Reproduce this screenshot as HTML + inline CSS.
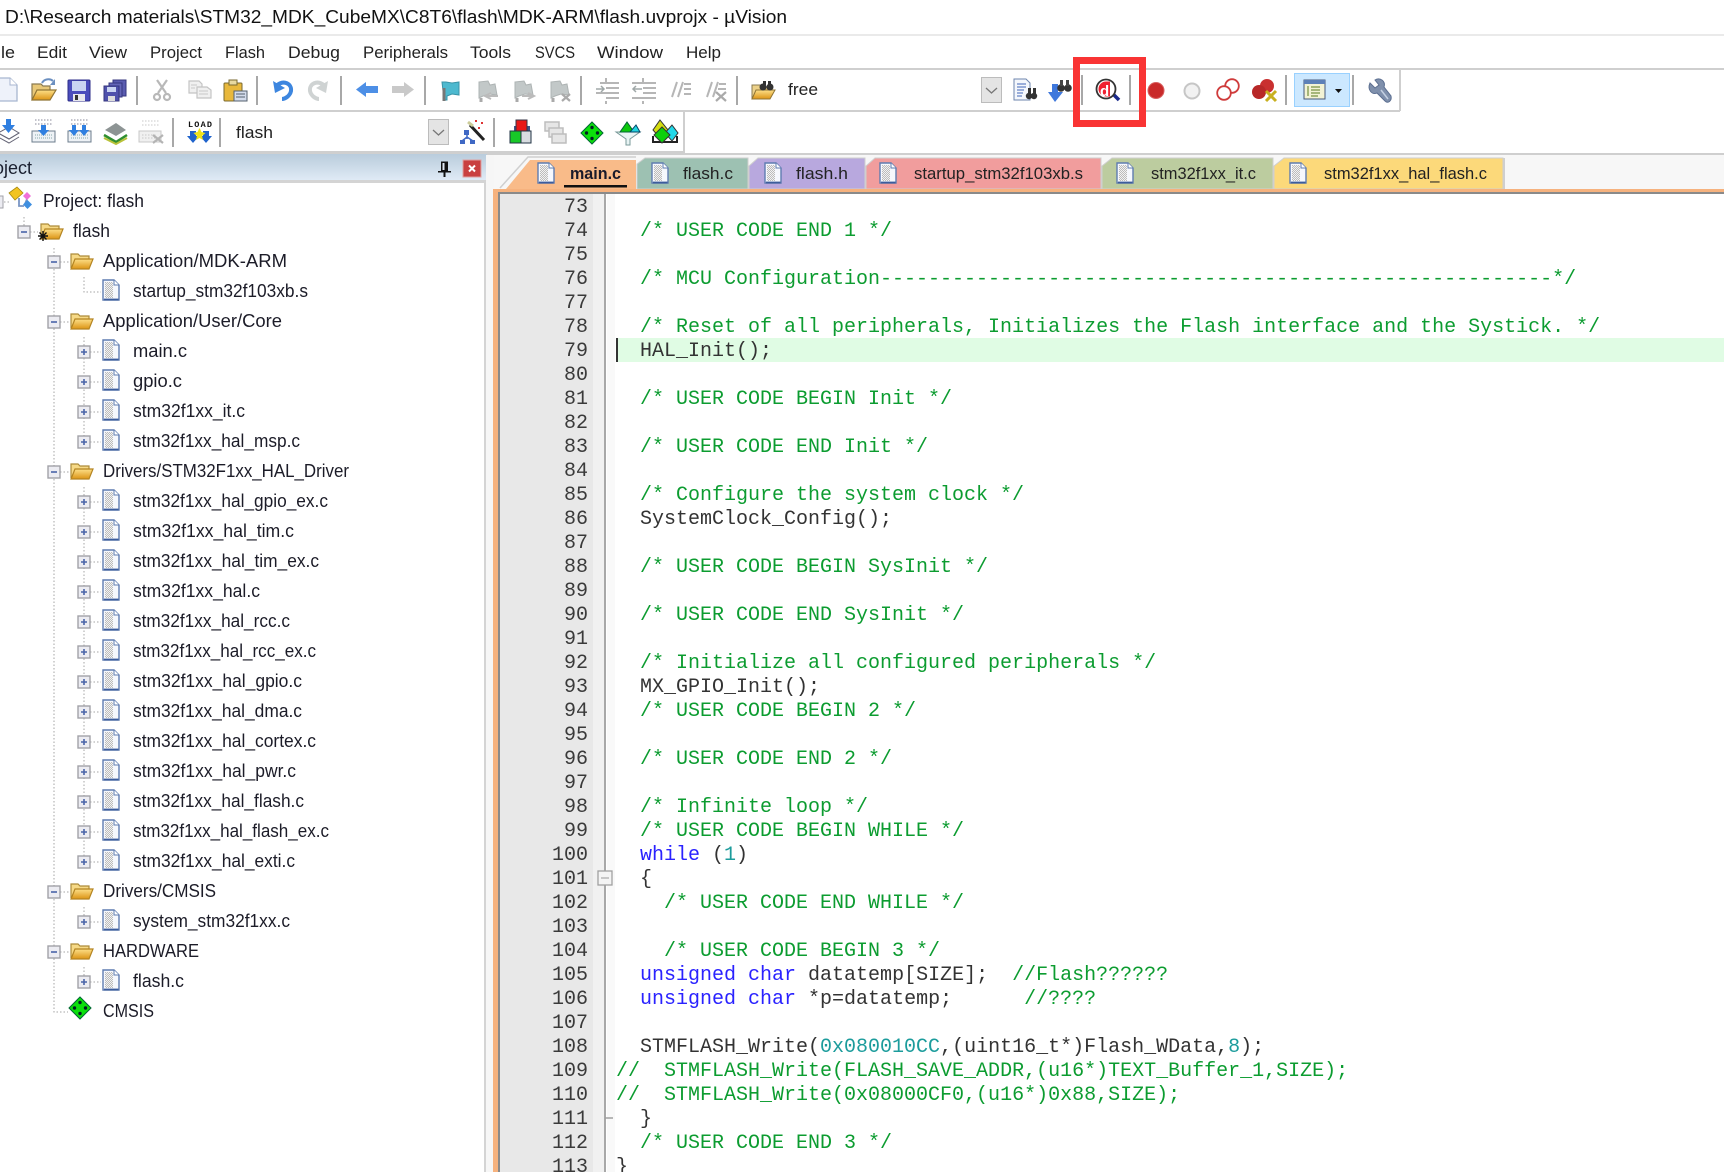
<!DOCTYPE html>
<html lang="en"><head><meta charset="utf-8"><title>flash.uvprojx - µVision</title>
<style>
html,body{margin:0;padding:0;background:#fff;width:1724px;height:1172px;overflow:hidden}
svg{display:block;font-family:"Liberation Sans",sans-serif}
text{white-space:pre}
.t{font-size:18px;fill:#1c1c28}
.m{font-size:16.5px;fill:#222}
.tb{font-size:16.5px;fill:#222}
.c{font-family:"Liberation Mono",monospace;font-size:20px;fill:#333}
.n{font-family:"Liberation Mono",monospace;font-size:20px;fill:#3a3a3a;text-anchor:end}
.g{fill:#0c9c30}.k{fill:#2a22ff}.v{fill:#1c9c9c}
.s{stroke:#a8a8a8;stroke-width:2}
.d{stroke:#a4a4a4;stroke-width:1;stroke-dasharray:1.5 2;fill:none}
</style></head><body>
<svg width="1724" height="1172" viewBox="0 0 1724 1172" xmlns="http://www.w3.org/2000/svg">
<defs>
<linearGradient id="hd" x1="0" y1="0" x2="0" y2="1"><stop offset="0" stop-color="#b9ccdc"/><stop offset="1" stop-color="#dfeaf5"/></linearGradient>
<linearGradient id="fo" x1="0" y1="0" x2="0" y2="1"><stop offset="0" stop-color="#fde08a"/><stop offset="1" stop-color="#dc9414"/></linearGradient>
<pattern id="dt" width="2" height="2" patternUnits="userSpaceOnUse"><rect width="2" height="2" fill="#f2f2f2"/><rect width="1" height="1" fill="#bcbcbc"/><rect x="1" y="1" width="1" height="1" fill="#bcbcbc"/></pattern>
<g id="doc"><path d="M1 1H12L17 6V21H1Z" fill="#f6f8fd" stroke="#5f7cb0" stroke-width="1.400"/><rect x="3" y="3" width="8" height="16" fill="url(#dt)"/><path d="M12 1V6H17" fill="#fff" stroke="#5f7cb0"/><path d="M2 20.5H16.500" stroke="#3c5c9c" stroke-width="1.800"/></g>
<g id="fol"><path d="M1 16V2H8L10 4H19V8" fill="#f6d986" stroke="#ad8c3a" stroke-width="1.200"/><path d="M1 17L5 7H23L19 17Z" fill="url(#fo)" stroke="#b48522" stroke-width="1.200"/></g>
<g id="bm"><rect x="-6" y="-6" width="12" height="12" fill="#ececf2" stroke="#a2a2a8" stroke-width="1.400"/><path d="M-3 0H3" stroke="#4a64a8" stroke-width="1.600"/></g>
<g id="bp"><rect x="-6" y="-6" width="12" height="12" fill="#ececf2" stroke="#a2a2a8" stroke-width="1.400"/><path d="M-3 0H3M0-3V3" stroke="#4a64a8" stroke-width="1.600"/></g>
<g id="r3"><path class="d" d="M90 0H101"/><use href="#bp" x="84" y="0"/><use href="#doc" x="102" y="-13"/></g>
<g id="r2"><path class="d" d="M60 0H69"/><use href="#bm" x="54" y="0"/><use href="#fol" x="70" y="-10"/></g>
<g id="dia"><path d="M11 0L22 11L11 22L0 11Z" fill="#0be00b" stroke="#063" stroke-width="1"/><g fill="#022"><circle cx="11" cy="5.500" r="1.700"/><circle cx="5.500" cy="11" r="1.700"/><circle cx="16.500" cy="11" r="1.700"/><circle cx="11" cy="16.500" r="1.700"/></g></g>
<g id="gfl"><path d="M3 2L12 1L14 5L19 4L21 15L13 14L7 16L3 18Z" fill="#c2c8c8" stroke="#aeb4b4"/><path d="M5 18V22" stroke="#aaa" stroke-width="3"/></g>
</defs>

<rect width="1724" height="1172" fill="#fff"/>
<!-- title + menu -->
<text x="5" y="23" font-size="18" fill="#111" textLength="782" lengthAdjust="spacingAndGlyphs">D:\Research materials\STM32_MDK_CubeMX\C8T6\flash\MDK-ARM\flash.uvprojx - µVision</text>
<rect y="34.500" width="1724" height="1" fill="#d4d4d4"/>
<text class="m" x="1" y="58" textLength="14" lengthAdjust="spacingAndGlyphs">le</text>
<text class="m" x="37" y="58" textLength="30" lengthAdjust="spacingAndGlyphs">Edit</text>
<text class="m" x="89" y="58" textLength="38" lengthAdjust="spacingAndGlyphs">View</text>
<text class="m" x="150" y="58" textLength="52" lengthAdjust="spacingAndGlyphs">Project</text>
<text class="m" x="225" y="58" textLength="40" lengthAdjust="spacingAndGlyphs">Flash</text>
<text class="m" x="288" y="58" textLength="52" lengthAdjust="spacingAndGlyphs">Debug</text>
<text class="m" x="363" y="58" textLength="85" lengthAdjust="spacingAndGlyphs">Peripherals</text>
<text class="m" x="470" y="58" textLength="41" lengthAdjust="spacingAndGlyphs">Tools</text>
<text class="m" x="535" y="58" textLength="40" lengthAdjust="spacingAndGlyphs">SVCS</text>
<text class="m" x="597" y="58" textLength="66" lengthAdjust="spacingAndGlyphs">Window</text>
<text class="m" x="686" y="58" textLength="35" lengthAdjust="spacingAndGlyphs">Help</text>

<!-- toolbar frames -->
<rect y="68" width="1724" height="2" fill="#cfcfcf"/>
<rect y="70" width="1400" height="40" fill="#fff"/>
<rect y="110" width="1400" height="2" fill="#cfcfcf"/>
<rect x="1399" y="70" width="2" height="41" fill="#cfcfcf"/>
<rect y="112" width="684" height="39" fill="#fff"/>
<rect y="151" width="685" height="2" fill="#cfcfcf"/>
<rect x="683" y="112" width="2" height="40" fill="#cfcfcf"/>

<!-- toolbar separators -->
<g class="s"><path d="M137 76V105M257 76V105M341 76V105M425 76V105M581 76V105M737 76V105M1082 75V105M1130 75V105M1286 75V105M1353 75V105M173 118V147M220 118V147M494 118V147"/></g>

<!-- new -->
<path d="M-4 78H10L17 85V101H-4Z" fill="#eef2fa" stroke="#a8b6d0" stroke-width="1.300"/><path d="M10 78V85H17" fill="#fff" stroke="#a8b6d0"/>
<!-- open -->
<path d="M32 100V84H41L43 86H50V90" fill="#e8c878" stroke="#8a7a50" stroke-width="1.200"/><path d="M32 100L37 90H56L50 100Z" fill="url(#fo)" stroke="#8f7434" stroke-width="1.200"/><path d="M42 83C44 79 50 78 53 81" fill="none" stroke="#6b8fc0" stroke-width="2"/><path d="M55 79V85H50Z" fill="#6b8fc0"/>
<!-- save -->
<rect x="68" y="80" width="22" height="21" rx="1" fill="#4a4cbc" stroke="#2c2e88"/><rect x="72" y="81" width="14" height="10" fill="#c9d4f2"/><rect x="73" y="94" width="12" height="7" fill="#e8e8ee"/><rect x="75" y="95" width="3" height="5" fill="#333"/>
<!-- save all -->
<g stroke="#34367e"><rect x="113" y="80" width="13" height="16" fill="#5a5cb0"/><rect x="109" y="83" width="13" height="14" fill="#6466b8"/><rect x="104" y="86" width="15" height="15" fill="#4f51ac"/></g><rect x="107" y="87" width="9" height="5" fill="#c9d4f2"/><rect x="108" y="96" width="7" height="5" fill="#ddd"/>
<!-- cut -->
<g fill="none" stroke="#b8b8b8" stroke-width="2.200"><path d="M157 80L166 93M167 80L158 93"/><circle cx="157" cy="97" r="3"/><circle cx="167" cy="97" r="3"/></g>
<!-- copy -->
<g fill="#f0f0f0" stroke="#c4c4c4" stroke-width="1.200"><path d="M189 81H199L202 84V93H189Z"/><path d="M197 87H207L211 90V98H197Z"/></g><path d="M199 91H208M199 94H208M191 85H197M191 88H195" stroke="#c8c8c8"/>
<!-- paste -->
<rect x="224" y="83" width="18" height="18" rx="1" fill="#e8b83c" stroke="#7a6a30"/><rect x="229" y="80" width="8" height="5" fill="#e8d9a0" stroke="#7a6a30"/><rect x="234" y="91" width="13" height="10" fill="#d4dcec" stroke="#55606e"/><path d="M236 94H245M236 97H245" stroke="#55606e"/>
<!-- undo / redo -->
<path d="M276 86C284 79 292 84 291 91C290 96 285 99 282 99" fill="none" stroke="#3d86df" stroke-width="4"/><path d="M273 81L275 93L285 88Z" fill="#3d86df"/>
<path d="M325 86C317 79 309 84 310 91C311 96 316 99 319 99" fill="none" stroke="#cfd3d3" stroke-width="4"/><path d="M328 81L326 93L316 88Z" fill="#cfd3d3"/>
<!-- arrows -->
<path d="M356 89.500L366 82V86H378V93H366V97Z" fill="#4d8fe6"/>
<path d="M414 89.500L404 82V86H392V93H404V97Z" fill="#c9c9c9"/>
<!-- flags -->
<path d="M442 82H446L452 83L459 82V95L452 94L447 96V100H444Z" fill="#4db9cf" stroke="#3a94a8"/><path d="M444 88V101" stroke="#777" stroke-width="3"/>
<use href="#gfl" x="476" y="80"/><use href="#gfl" x="512" y="80"/><use href="#gfl" x="548" y="80"/>
<path d="M485 96H498M491 93L485 96L491 99" fill="none" stroke="#bbb" stroke-width="2"/>
<path d="M522 96H534M528 93L534 96L528 99" fill="none" stroke="#bbb" stroke-width="2"/>
<path d="M562 94L570 101M570 94L562 101" stroke="#aaa" stroke-width="2.200"/>
<!-- indent -->
<g stroke="#b6b6b6" stroke-width="2"><path d="M606 82V78M600 83H619M606 88H619M596 93H619M606 98H619M606 101V104"/><path d="M643 78V82M632 83H656M643 88H656M643 93H656M632 98H656M643 101V104"/><path d="M672 97L677 82M678 97L683 82M684 84H691M684 89H691M684 94H691"/><path d="M707 97L712 82M713 97L718 82M719 84H726M718 89H726"/></g>
<path d="M596 89H604M601 86L604 89L601 92M642 89H633M636 86L633 89L636 92" fill="none" stroke="#a0a8a8" stroke-width="1.500"/>
<path d="M716 92L726 101M726 92L716 101" stroke="#aaa" stroke-width="2.200"/>
<!-- find in folder -->
<path d="M752 99V85H760L762 87H772V91" fill="#ecd189" stroke="#8a7a50"/><path d="M752 99L756 90H775L770 99Z" fill="url(#fo)" stroke="#8f7434"/>
<circle cx="763" cy="87" r="3.500" fill="#333"/><circle cx="770" cy="87" r="3.500" fill="#333"/><rect x="763" y="81" width="3" height="4" fill="#333"/><rect x="768" y="81" width="3" height="4" fill="#333"/>
<text class="tb" x="788" y="95" font-weight="400" textLength="30" lengthAdjust="spacingAndGlyphs">free</text>
<!-- combo -->
<rect x="981.500" y="77.500" width="20" height="25" fill="#e4e4e4" stroke="#bcbcbc"/><path d="M986 88L991.500 93L997 88" fill="none" stroke="#777" stroke-width="1.300"/>
<!-- find doc -->
<path d="M1014 79H1026L1030 83V100H1014Z" fill="#f4f7fc" stroke="#6e86ae"/><path d="M1017 84H1026M1017 87H1026M1017 90H1024M1017 93H1023M1017 96H1022" stroke="#3f66b8"/>
<circle cx="1029" cy="96" r="3.200" fill="#333"/><circle cx="1034" cy="96" r="3.200" fill="#333"/><rect x="1028" y="88" width="3" height="6" fill="#333"/><rect x="1033" y="88" width="3" height="6" fill="#333"/>
<!-- binoc + arrow -->
<path d="M1052 84H1058V92H1063L1055 102L1048 92H1052Z" fill="#3f78dc"/>
<circle cx="1061" cy="88" r="3.800" fill="#333"/><circle cx="1068" cy="88" r="3.800" fill="#333"/><rect x="1060" y="80" width="3" height="6" fill="#444"/><rect x="1066" y="80" width="3" height="6" fill="#444"/>
<!-- debug -->
<path d="M1113 94L1119 100" stroke="#1a2a8c" stroke-width="3.500"/>
<circle cx="1106" cy="89" r="9.500" fill="#fff" stroke="#333" stroke-width="1.800"/>
<path d="M1106 81.500A7.500 7.500 0 0 0 1106 96.500Z" fill="#f02030"/><path d="M1106 81.500H1110V96.500H1106Z" fill="#f02030"/>
<text x="1100" y="96" font-size="15" font-weight="700" fill="#fff">d</text>
<!-- red box -->
<rect x="1076.500" y="60.500" width="66" height="63" fill="none" stroke="#f93434" stroke-width="7"/>
<!-- breakpoints -->
<circle cx="1156" cy="90.500" r="8" fill="#c92a2a" stroke="#d86060"/>
<circle cx="1192" cy="91" r="7.500" fill="#f2f2f2" stroke="#c6c6c6" stroke-width="2"/>
<circle cx="1232" cy="86" r="6.800" fill="#fff" stroke="#cf3b3b" stroke-width="1.800"/><circle cx="1224" cy="93" r="6.800" fill="#fff" stroke="#cf3b3b" stroke-width="1.800"/>
<circle cx="1267" cy="86" r="7" fill="#c93030"/><circle cx="1259" cy="92" r="7" fill="#b82828"/><path d="M1266 91L1276 101M1276 91L1266 101" stroke="#c8b020" stroke-width="3"/>
<!-- window button -->
<rect x="1294.500" y="73.500" width="55" height="33" fill="#cce8ff" stroke="#99d1ff"/>
<rect x="1304" y="80" width="21" height="19" fill="#f2f2d4" stroke="#47587a"/><rect x="1304" y="80" width="21" height="4" fill="#5c80b8"/><path d="M1308 86V96M1311 87H1320M1311 90H1320M1311 93H1320M1311 96H1318" stroke="#5b7a20"/>
<path d="M1335 89H1342L1338.500 93Z" fill="#111"/>
<!-- wrench -->
<path d="M1370 83L1375 88L1379 85L1375 80C1380 77 1386 81 1384 87L1391 96C1392 101 1388 104 1385 101L1377 93C1372 95 1367 90 1370 83Z" fill="#7f90ac" stroke="#5b6e90"/><path d="M1381 90L1388 99" stroke="#c4d0e2" stroke-width="1.500"/>

<!-- toolbar 2 -->
<path d="M-2 133L9 127L19 133L9 139Z" fill="#fff" stroke="#667"/><path d="M-2 137L9 143L19 137M-2 133L9 139L19 133" fill="none" stroke="#667"/><path d="M6 119H11V125H15L8.500 133L2 125H6Z" fill="#2f7fe0"/>
<g fill="#eef2f6" stroke="#6c7c8c"><rect x="32" y="131" width="23" height="11"/><rect x="68" y="131" width="23" height="11"/></g>
<path d="M35 135H52M35 138H52M71 135H88M71 138H88" stroke="#8aa" stroke-dasharray="1 1"/>
<path d="M35 120H52M35 124H52M71 120H88M71 124H88" stroke="#889" stroke-dasharray="1.500 1.500"/>
<path d="M41 125H46V130H49L43.500 136L38 130H41Z" fill="#2f7fe0"/><path d="M72 125H76V130H79L74 136L69 130H72ZM82 125H86V130H89L84 136L79 130H82Z" fill="#2f7fe0"/>
<path d="M104 135L116 142L127 135" fill="none" stroke="#2f8f2f" stroke-width="2.500"/><path d="M104 138L116 144L127 138" fill="none" stroke="#b9c23a" stroke-width="2"/><path d="M105 130L116 123L126 130L116 136Z" fill="#8d9494"/>
<rect x="139" y="131" width="22" height="11" fill="#f0f0f0" stroke="#c8c8c8"/><path d="M142 121H160M142 125H160M142 135H156M142 138H156" stroke="#c8c8c8" stroke-dasharray="1.500 1.500"/><path d="M153 135L163 143M163 135L153 143" stroke="#b4b4b4" stroke-width="2.200"/>
<text x="188" y="127" font-family="Liberation Mono,monospace" font-size="8.500" font-weight="700" fill="#111" textLength="24">LOAD</text>
<path d="M190 131H196V136H199L193 143L187 136H190ZM203 131H209V136H212L206 143L200 136H203Z" fill="#1f63cc"/><path d="M199.500 128L201.500 132L205.500 133L202 136L203 140L199.500 138L196 140L197 136L193.500 133L197.500 132Z" fill="#eee21a"/>
<text class="tb" x="236" y="138" textLength="37" lengthAdjust="spacingAndGlyphs">flash</text>
<rect x="428.500" y="119.500" width="20" height="25" fill="#e4e4e4" stroke="#bcbcbc"/><path d="M433 130L438.500 135L444 130" fill="none" stroke="#777" stroke-width="1.300"/>
<!-- wand -->
<path d="M470 125L484 140" stroke="#222" stroke-width="3"/><path d="M468 122L473 126" stroke="#cc9" stroke-width="3"/>
<path d="M467 133V139M462 141L467 137L473 141" fill="none" stroke="#3f68c4" stroke-width="1.500"/><rect x="464" y="130" width="5" height="5" fill="#3f68c4"/><rect x="460" y="140" width="5" height="4" fill="#3f68c4"/><rect x="470" y="140" width="5" height="4" fill="#3f68c4"/>
<g fill="#d33"><rect x="475" y="120" width="2" height="2"/><rect x="481" y="122" width="2" height="2"/><rect x="478" y="127" width="2" height="2"/></g>
<!-- components -->
<path d="M514 131V126H530V131" fill="#3e5488"/><rect x="516" y="120" width="11" height="11" fill="#e81818" stroke="#334"/><rect x="510" y="131" width="11" height="12" fill="#18c828" stroke="#234"/><rect x="521" y="131" width="10" height="12" fill="#d8dce0" stroke="#234"/>
<g fill="#e6e6e6" stroke="#bdbdbd" stroke-width="1.500"><rect x="545" y="122" width="14" height="9"/><rect x="549" y="128" width="14" height="9"/><rect x="552" y="134" width="14" height="9"/></g>
<use href="#dia" x="581" y="122"/>
<!-- funnel -->
<path d="M616 132H640L630 139V145H626V139Z" fill="#e8f4f4" stroke="#7a9a9a"/><path d="M620 132L627 122L634 132Z" fill="#0cc80c" stroke="#063"/><path d="M630 132L636 125L640 132Z" fill="#22d4e0" stroke="#046"/>
<!-- multi -->
<path d="M653 136V142H677V136" fill="none" stroke="#222" stroke-width="2"/><path d="M660 120L668 130L660 138L653 130Z" fill="#d4dc10" stroke="#333"/><path d="M672 125L678 133L672 141L665 133Z" fill="#22d8e8" stroke="#333"/><path d="M662 127L670 135L662 143L654 135Z" fill="#0cd00c" stroke="#333"/>

<!-- project header -->
<rect y="153" width="1724" height="2" fill="#cfcfcf"/>
<rect y="154" width="487" height="26" fill="url(#hd)"/>
<text x="-24" y="174" font-size="18" fill="#1a2030" textLength="56" lengthAdjust="spacingAndGlyphs">Project</text>
<path d="M441 161.500H448V171H451V172.500H445.500V177H443.500V172.500H438V171H441Z" fill="#111"/><rect x="442.500" y="163" width="2" height="7" fill="#dfe8f2"/>
<rect x="463" y="160" width="18" height="17" fill="#c94040" stroke="#e0a0a0"/><path d="M469 165.500L475 171.500M475 165.500L469 171.500" stroke="#fff" stroke-width="2"/>
<rect y="180" width="487" height="3" fill="#d4d4d4"/>
<rect x="484" y="180" width="2" height="992" fill="#d4d4d4"/>
<rect x="486" y="155" width="8" height="1017" fill="#f6f6f6"/>

<!-- tree lines -->
<path class="d" d="M24 217V226M30 232H38M4 202H10"/>
<path class="d" d="M54 248V1012H68"/>
<path class="d" d="M84 277V292H101M84 337V442M84 487V862M84 907V922M84 967V982"/>
<rect x="-4" y="196" width="7" height="12" fill="#ececf2" stroke="#a2a2a8"/>
<!-- project icon -->
<path d="M19 198V206H24M27 199L25 204" fill="none" stroke="#7a96c4" stroke-width="1.800"/>
<path d="M9 193L17 187L23 193L15 200Z" fill="#f2c420" stroke="#a88a10" stroke-width=".8"/><path d="M23 196L27 192L31 196L27 200Z" fill="#f070d8"/><path d="M23 204.500L27.500 200L32 204.500L27.500 209Z" fill="#3f8fe0"/>
<!-- flash -->
<use href="#bm" x="24" y="232"/>
<use href="#fol" x="40" y="222"/>
<path d="M38 236H48M43 231V241M39.500 232.500L46.500 239.500M46.500 232.500L39.500 239.500" stroke="#111" stroke-width="1.400"/>

<use href="#r2" y="262"/><use href="#r2" y="322"/><use href="#r2" y="472"/><use href="#r2" y="892"/><use href="#r2" y="952"/>
<use href="#doc" x="102" y="279"/>
<use href="#r3" y="352"/><use href="#r3" y="382"/><use href="#r3" y="412"/><use href="#r3" y="442"/>
<use href="#r3" y="502"/><use href="#r3" y="532"/><use href="#r3" y="562"/><use href="#r3" y="592"/><use href="#r3" y="622"/><use href="#r3" y="652"/><use href="#r3" y="682"/><use href="#r3" y="712"/><use href="#r3" y="742"/><use href="#r3" y="772"/><use href="#r3" y="802"/><use href="#r3" y="832"/><use href="#r3" y="862"/>
<use href="#r3" y="922"/><use href="#r3" y="982"/>
<use href="#dia" x="69" y="997"/>

<!-- tree text -->
<g transform="translate(0,-1)">
<text class="t" x="43" y="208" textLength="101" lengthAdjust="spacingAndGlyphs">Project: flash</text>
<text class="t" x="73" y="238" textLength="37" lengthAdjust="spacingAndGlyphs">flash</text>
<text class="t" x="103" y="268" textLength="184" lengthAdjust="spacingAndGlyphs">Application/MDK-ARM</text>
<text class="t" x="133" y="298" textLength="175" lengthAdjust="spacingAndGlyphs">startup_stm32f103xb.s</text>
<text class="t" x="103" y="328" textLength="179" lengthAdjust="spacingAndGlyphs">Application/User/Core</text>
<text class="t" x="133" y="358" textLength="54" lengthAdjust="spacingAndGlyphs">main.c</text>
<text class="t" x="133" y="388" textLength="49" lengthAdjust="spacingAndGlyphs">gpio.c</text>
<text class="t" x="133" y="418" textLength="112" lengthAdjust="spacingAndGlyphs">stm32f1xx_it.c</text>
<text class="t" x="133" y="448" textLength="167" lengthAdjust="spacingAndGlyphs">stm32f1xx_hal_msp.c</text>
<text class="t" x="103" y="478" textLength="246" lengthAdjust="spacingAndGlyphs">Drivers/STM32F1xx_HAL_Driver</text>
<text class="t" x="133" y="508" textLength="195" lengthAdjust="spacingAndGlyphs">stm32f1xx_hal_gpio_ex.c</text>
<text class="t" x="133" y="538" textLength="161" lengthAdjust="spacingAndGlyphs">stm32f1xx_hal_tim.c</text>
<text class="t" x="133" y="568" textLength="186" lengthAdjust="spacingAndGlyphs">stm32f1xx_hal_tim_ex.c</text>
<text class="t" x="133" y="598" textLength="127" lengthAdjust="spacingAndGlyphs">stm32f1xx_hal.c</text>
<text class="t" x="133" y="628" textLength="157" lengthAdjust="spacingAndGlyphs">stm32f1xx_hal_rcc.c</text>
<text class="t" x="133" y="658" textLength="183" lengthAdjust="spacingAndGlyphs">stm32f1xx_hal_rcc_ex.c</text>
<text class="t" x="133" y="688" textLength="169" lengthAdjust="spacingAndGlyphs">stm32f1xx_hal_gpio.c</text>
<text class="t" x="133" y="718" textLength="169" lengthAdjust="spacingAndGlyphs">stm32f1xx_hal_dma.c</text>
<text class="t" x="133" y="748" textLength="183" lengthAdjust="spacingAndGlyphs">stm32f1xx_hal_cortex.c</text>
<text class="t" x="133" y="778" textLength="163" lengthAdjust="spacingAndGlyphs">stm32f1xx_hal_pwr.c</text>
<text class="t" x="133" y="808" textLength="171" lengthAdjust="spacingAndGlyphs">stm32f1xx_hal_flash.c</text>
<text class="t" x="133" y="838" textLength="196" lengthAdjust="spacingAndGlyphs">stm32f1xx_hal_flash_ex.c</text>
<text class="t" x="133" y="868" textLength="162" lengthAdjust="spacingAndGlyphs">stm32f1xx_hal_exti.c</text>
<text class="t" x="103" y="898" textLength="113" lengthAdjust="spacingAndGlyphs">Drivers/CMSIS</text>
<text class="t" x="133" y="928" textLength="157" lengthAdjust="spacingAndGlyphs">system_stm32f1xx.c</text>
<text class="t" x="103" y="958" textLength="96" lengthAdjust="spacingAndGlyphs">HARDWARE</text>
<text class="t" x="133" y="988" textLength="51" lengthAdjust="spacingAndGlyphs">flash.c</text>
<text class="t" x="103" y="1018" textLength="51" lengthAdjust="spacingAndGlyphs">CMSIS</text>
</g>

<!-- tab strip -->
<rect x="494" y="155" width="1230" height="35" fill="#f7f7f7"/>
<path d="M500 188L528 157H636" fill="none" stroke="#cfcfcf" stroke-width="1.500"/>
<path d="M506 189L530 160H636V189Z" fill="#f9bb89"/>
<path d="M637 189V164L645 158H748V189Z" fill="#9dc1b2" stroke="#cfcfcf"/>
<path d="M749 189V166L758 158H865V189Z" fill="#b8a8de" stroke="#cfcfcf"/>
<path d="M866 189V166L875 158H1101V189Z" fill="#f19d9d" stroke="#cfcfcf"/>
<path d="M1102 189V166L1112 158H1273V189Z" fill="#bccc9f" stroke="#cfcfcf"/>
<path d="M1274 189V166L1284 158H1503V189Z" fill="#fcd97a" stroke="#cfcfcf"/>
<rect x="1503" y="158" width="2" height="31" fill="#cfcfcf"/>
<use href="#doc" x="537" y="162"/><use href="#doc" x="651" y="162"/><use href="#doc" x="764" y="162"/><use href="#doc" x="879" y="162"/><use href="#doc" x="1116" y="162"/><use href="#doc" x="1289" y="162"/>
<text x="570" y="179" font-size="16.500" font-weight="700" fill="#1a1a2a" textLength="51" lengthAdjust="spacingAndGlyphs">main.c</text>
<rect x="564" y="185" width="63" height="2.500" fill="#111"/>
<text class="tb" x="683" y="179" textLength="50" lengthAdjust="spacingAndGlyphs">flash.c</text>
<text class="tb" x="796" y="179" textLength="52" lengthAdjust="spacingAndGlyphs">flash.h</text>
<text class="tb" x="914" y="179" textLength="169" lengthAdjust="spacingAndGlyphs">startup_stm32f103xb.s</text>
<text class="tb" x="1151" y="179" textLength="105" lengthAdjust="spacingAndGlyphs">stm32f1xx_it.c</text>
<text class="tb" x="1324" y="179" textLength="163" lengthAdjust="spacingAndGlyphs">stm32f1xx_hal_flash.c</text>

<!-- editor frame -->
<rect x="493" y="189" width="1231" height="3" fill="#f6b27e"/>
<rect x="493" y="189" width="5" height="983" fill="#f6b27e"/>
<rect x="498" y="192" width="1226" height="2" fill="#8a8a8a"/>
<rect x="498" y="192" width="2" height="980" fill="#8a8a8a"/>
<rect x="500" y="194" width="93" height="978" fill="#e8e8e8"/>
<rect x="593" y="194" width="11" height="978" fill="#f1f1f1"/>
<rect x="607" y="194" width="8" height="978" fill="#f9f9f9"/>
<rect x="604" y="194" width="2" height="978" fill="#a8a8a8"/>
<rect x="618" y="338" width="1106" height="24" fill="#e0fce4"/>
<rect x="616" y="338" width="2" height="24" fill="#333"/>
<rect x="598" y="871" width="14" height="14" fill="#f4f4f4" stroke="#a0a0a0" stroke-width="1.300"/>
<path d="M601 878H609" stroke="#999"/>
<path d="M605 1118H613" stroke="#a0a0a0" stroke-width="1.500"/>

<!-- line numbers -->
<g transform="translate(0,-1)">
<text class="n" x="588" y="213">73</text>
<text class="n" x="588" y="237">74</text>
<text class="n" x="588" y="261">75</text>
<text class="n" x="588" y="285">76</text>
<text class="n" x="588" y="309">77</text>
<text class="n" x="588" y="333">78</text>
<text class="n" x="588" y="357">79</text>
<text class="n" x="588" y="381">80</text>
<text class="n" x="588" y="405">81</text>
<text class="n" x="588" y="429">82</text>
<text class="n" x="588" y="453">83</text>
<text class="n" x="588" y="477">84</text>
<text class="n" x="588" y="501">85</text>
<text class="n" x="588" y="525">86</text>
<text class="n" x="588" y="549">87</text>
<text class="n" x="588" y="573">88</text>
<text class="n" x="588" y="597">89</text>
<text class="n" x="588" y="621">90</text>
<text class="n" x="588" y="645">91</text>
<text class="n" x="588" y="669">92</text>
<text class="n" x="588" y="693">93</text>
<text class="n" x="588" y="717">94</text>
<text class="n" x="588" y="741">95</text>
<text class="n" x="588" y="765">96</text>
<text class="n" x="588" y="789">97</text>
<text class="n" x="588" y="813">98</text>
<text class="n" x="588" y="837">99</text>
<text class="n" x="588" y="861">100</text>
<text class="n" x="588" y="885">101</text>
<text class="n" x="588" y="909">102</text>
<text class="n" x="588" y="933">103</text>
<text class="n" x="588" y="957">104</text>
<text class="n" x="588" y="981">105</text>
<text class="n" x="588" y="1005">106</text>
<text class="n" x="588" y="1029">107</text>
<text class="n" x="588" y="1053">108</text>
<text class="n" x="588" y="1077">109</text>
<text class="n" x="588" y="1101">110</text>
<text class="n" x="588" y="1125">111</text>
<text class="n" x="588" y="1149">112</text>
<text class="n" x="588" y="1173">113</text>
</g>

<!-- code -->
<g transform="translate(-1,-1)">
<text class="c g" x="641" y="237">/* USER CODE END 1 */</text>
<text class="c g" x="641" y="285">/* MCU Configuration--------------------------------------------------------*/</text>
<text class="c g" x="641" y="333">/* Reset of all peripherals, Initializes the Flash interface and the Systick. */</text>
<text class="c" x="641" y="357">HAL_Init();</text>
<text class="c g" x="641" y="405">/* USER CODE BEGIN Init */</text>
<text class="c g" x="641" y="453">/* USER CODE END Init */</text>
<text class="c g" x="641" y="501">/* Configure the system clock */</text>
<text class="c" x="641" y="525">SystemClock_Config();</text>
<text class="c g" x="641" y="573">/* USER CODE BEGIN SysInit */</text>
<text class="c g" x="641" y="621">/* USER CODE END SysInit */</text>
<text class="c g" x="641" y="669">/* Initialize all configured peripherals */</text>
<text class="c" x="641" y="693">MX_GPIO_Init();</text>
<text class="c g" x="641" y="717">/* USER CODE BEGIN 2 */</text>
<text class="c g" x="641" y="765">/* USER CODE END 2 */</text>
<text class="c g" x="641" y="813">/* Infinite loop */</text>
<text class="c g" x="641" y="837">/* USER CODE BEGIN WHILE */</text>
<text class="c" x="641" y="861"><tspan class="k">while</tspan> (<tspan class="v">1</tspan>)</text>
<text class="c" x="641" y="885">{</text>
<text class="c g" x="665" y="909">/* USER CODE END WHILE */</text>
<text class="c g" x="665" y="957">/* USER CODE BEGIN 3 */</text>
<text class="c" x="641" y="981"><tspan class="k">unsigned</tspan> <tspan class="k">char</tspan> datatemp[SIZE];  <tspan class="g">//Flash??????</tspan></text>
<text class="c" x="641" y="1005"><tspan class="k">unsigned</tspan> <tspan class="k">char</tspan> *p=datatemp;      <tspan class="g">//????</tspan></text>
<text class="c" x="641" y="1053">STMFLASH_Write(<tspan class="v">0x080010CC</tspan>,(uint16_t*)Flash_WData,<tspan class="v">8</tspan>);</text>
<text class="c g" x="617" y="1077">//  STMFLASH_Write(FLASH_SAVE_ADDR,(u16*)TEXT_Buffer_1,SIZE);</text>
<text class="c g" x="617" y="1101">//  STMFLASH_Write(0x08000CF0,(u16*)0x88,SIZE);</text>
<text class="c" x="641" y="1125">}</text>
<text class="c g" x="641" y="1149">/* USER CODE END 3 */</text>
<text class="c" x="617" y="1173">}</text>
</g>
</svg>
</body></html>
